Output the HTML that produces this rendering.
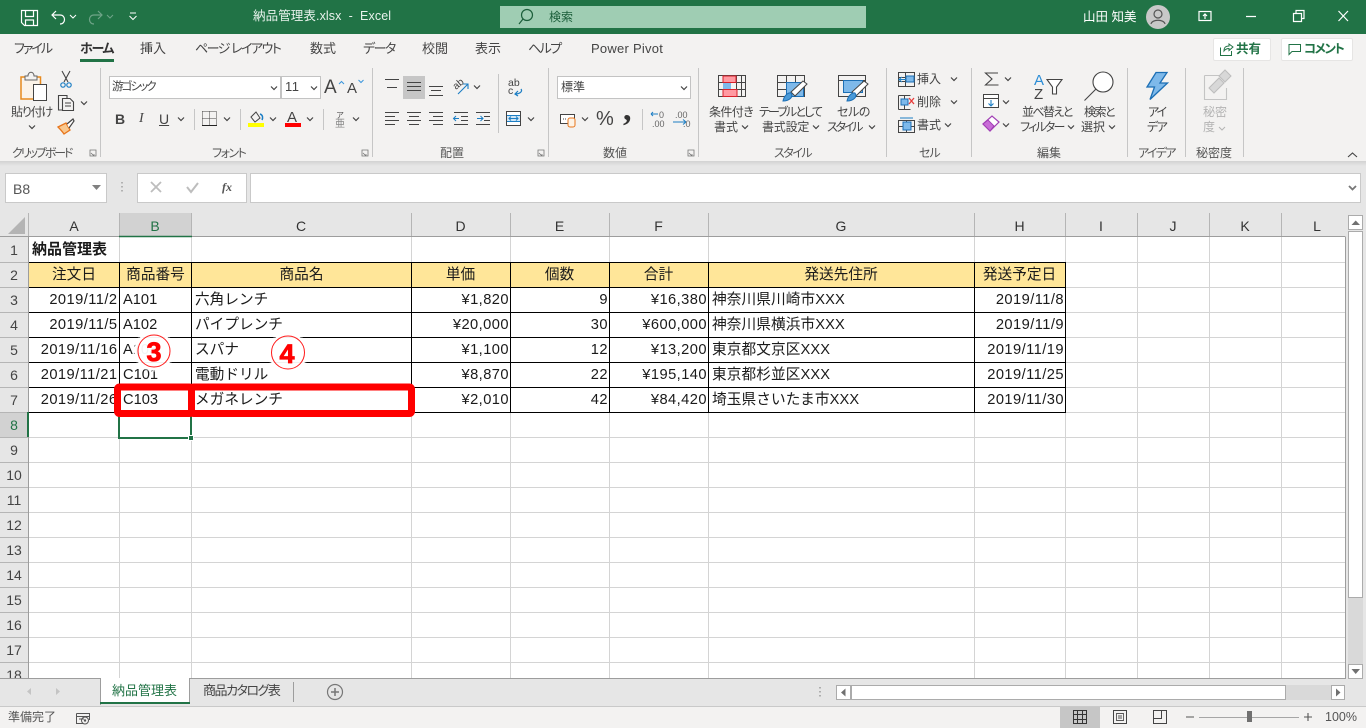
<!DOCTYPE html>
<html lang="ja"><head><meta charset="utf-8"><title>納品管理表.xlsx - Excel</title>
<style>
html,body{margin:0;padding:0;width:1366px;height:728px;overflow:hidden;background:#e6e6e6;font-family:"Liberation Sans","Noto Sans CJK JP",sans-serif}
div{position:absolute;box-sizing:border-box}
svg{position:absolute;left:0;top:0}
.t{white-space:nowrap;font-size:12px;line-height:16px;color:#444;font-family:"Liberation Sans","Noto Sans CJK JP",sans-serif;font-feature-settings:"palt"}
.l{color:#444;font-size:12px}
.tab{font-size:13px;line-height:18px;top:40px;color:#444}
.g{top:145px;color:#555;font-size:12px}
.c{white-space:nowrap;height:25px;line-height:26px;font-size:14.67px;color:#1a1a1a;font-family:"Liberation Sans","Noto Sans CJK JP",sans-serif;letter-spacing:.5px}
.n{text-align:right;letter-spacing:.45px}
.A{left:29px;width:88.500px}.B{left:123px;width:66px;letter-spacing:0}.C{left:195px;width:214px;letter-spacing:0}.D{left:412px;width:97px}.E{left:511px;width:97px}.F{left:610px;width:97px}.G{left:712px;width:260px;letter-spacing:.1px}.H{left:975px;width:89px}
.ch{top:213px;height:24px;line-height:26px;text-align:center;font-size:14px;color:#333}
.rh{left:0;width:28px;height:25px;line-height:26px;text-align:center;font-size:14px;color:#444}
.hd{top:262px;text-align:center;letter-spacing:0}
</style></head><body>

<!-- backgrounds -->
<div style="left:0;top:0;width:1366px;height:34px;background:#217346"></div>
<div style="left:500px;top:6px;width:366px;height:22px;background:#9fcdb3"></div>
<div style="left:0;top:34px;width:1366px;height:127px;background:#f3f2f1"></div>
<div style="left:0;top:161px;width:1366px;height:5px;background:linear-gradient(#d2d2d2,#e6e6e6)"></div>

<!-- title bar text -->
<div class="t" style="left:253px;top:8px;color:#e8f2ec;font-size:12.500px;line-height:16px;letter-spacing:.1px;font-feature-settings:normal">納品管理表.xlsx&nbsp; -&nbsp; Excel</div>
<div class="t" style="left:549px;top:9px;color:#1b5e3a;font-size:12px;font-feature-settings:normal">検索</div>
<div class="t" style="left:1083px;top:9px;color:#fff;font-size:12.500px;font-feature-settings:normal">山田 知美</div>

<!-- tabs -->
<div class="t tab" style="left:14px;letter-spacing:-2px">ファイル</div>
<div class="t tab" style="left:80px;font-weight:bold;color:#333;letter-spacing:-1.300px">ホーム</div>
<div class="t tab" style="left:140px">挿入</div>
<div class="t tab" style="left:195px;letter-spacing:-1.500px">ページ レイアウト</div>
<div class="t tab" style="left:310px">数式</div>
<div class="t tab" style="left:363px;letter-spacing:-1.500px">データ</div>
<div class="t tab" style="left:422px">校閲</div>
<div class="t tab" style="left:475px">表示</div>
<div class="t tab" style="left:528px;letter-spacing:-1.600px">ヘルプ</div>
<div class="t tab" style="left:591px;font-size:13px;letter-spacing:.25px">Power Pivot</div>
<div style="left:80px;top:59px;width:34px;height:3px;background:#217346"></div>

<div style="left:1213px;top:38px;width:58px;height:23px;background:#fff;border:1px solid #e6e5e4;border-radius:2px"></div>
<div style="left:1281px;top:38px;width:72px;height:23px;background:#fff;border:1px solid #e6e5e4;border-radius:2px"></div>
<div class="t" style="left:1236px;top:41px;color:#217346;font-weight:bold;font-size:12.500px;font-feature-settings:normal">共有</div>
<div class="t" style="left:1304px;top:41px;color:#217346;font-weight:bold;font-size:12.500px;letter-spacing:-1.500px">コメント</div>

<!-- ribbon controls -->
<div style="left:109px;top:76px;width:172px;height:23px;background:#fff;border:1px solid #c3c3c3"></div>
<div style="left:281px;top:76px;width:40px;height:23px;background:#fff;border:1px solid #c3c3c3"></div>
<div style="left:557px;top:76px;width:134px;height:23px;background:#fff;border:1px solid #c3c3c3"></div>
<div style="left:403px;top:76px;width:22px;height:23px;background:#c6c6c6"></div>

<div class="t" style="left:112px;top:79px;font-size:11.500px;letter-spacing:-1.900px">游ゴシック</div>
<div class="t" style="left:285px;top:79px;font-size:13px;letter-spacing:.5px">11</div>
<div class="t" style="left:561px;top:79px;font-size:12px;font-feature-settings:normal">標準</div>
<div class="t" style="left:324px;top:76px;font-size:19px;line-height:24px;color:#444">A</div>
<div class="t" style="left:347px;top:79px;font-size:15px;line-height:20px;color:#444">A</div>
<div class="t" style="left:115px;top:111px;font-size:14px;font-weight:bold">B</div>
<div class="t" style="left:139px;top:111px;font-size:14px;font-style:italic;font-family:'Liberation Serif',serif">I</div>
<div class="t" style="left:159px;top:111px;font-size:14px;text-decoration:underline">U</div>
<div class="t" style="left:596px;top:106px;font-size:20px;line-height:26px;color:#444">%</div>
<div class="t" style="left:623px;top:95px;font-size:34px;line-height:30px;color:#333;font-weight:bold;font-family:'Liberation Serif',serif">,</div>
<div class="t" style="left:508px;top:78px;font-size:10.500px;line-height:11px;color:#444">ab</div>
<div class="t" style="left:508px;top:86px;font-size:10.500px;line-height:11px;color:#444">c</div>
<div class="t" style="left:287px;top:110px;font-size:15px;color:#444">A</div>

<div class="t l" style="left:11px;top:104px;letter-spacing:-1.200px">貼り付け</div>
<div class="t l" style="left:709px;top:104px;letter-spacing:-.6px">条件付き</div>
<div class="t l" style="left:714px;top:119px">書式</div>
<div class="t l" style="left:759px;top:104px;letter-spacing:-1.850px">テーブルとして</div>
<div class="t l" style="left:762px;top:119px;letter-spacing:-.2px">書式設定</div>
<div class="t l" style="left:837px;top:104px;letter-spacing:-.4px">セルの</div>
<div class="t l" style="left:827px;top:119px;letter-spacing:-2.200px">スタイル</div>
<div class="t l" style="left:917px;top:71px">挿入</div>
<div class="t l" style="left:917px;top:94px">削除</div>
<div class="t l" style="left:917px;top:117px">書式</div>
<div class="t l" style="left:1022px;top:104px;letter-spacing:-1.600px">並べ替えと</div>
<div class="t l" style="left:1020px;top:119px;letter-spacing:-1.800px">フィルター</div>
<div class="t l" style="left:1084px;top:104px;letter-spacing:-1.500px">検索と</div>
<div class="t l" style="left:1081px;top:119px">選択</div>
<div class="t l" style="left:1148px;top:104px;letter-spacing:-2px">アイ</div>
<div class="t l" style="left:1147px;top:119px;letter-spacing:-1.500px">デア</div>
<div class="t l" style="left:1203px;top:104px;color:#b4b4b4">秘密</div>
<div class="t l" style="left:1203px;top:119px;color:#b4b4b4">度</div>

<div class="t g" style="left:12px;letter-spacing:-2.100px">クリップボード</div>
<div class="t g" style="left:212px;letter-spacing:-1.500px">フォント</div>
<div class="t g" style="left:440px">配置</div>
<div class="t g" style="left:603px">数値</div>
<div class="t g" style="left:774px;letter-spacing:-1.500px">スタイル</div>
<div class="t g" style="left:919px;letter-spacing:-1px">セル</div>
<div class="t g" style="left:1037px">編集</div>
<div class="t g" style="left:1138px;letter-spacing:-1.700px">アイデア</div>
<div class="t g" style="left:1196px">秘密度</div>

<!-- formula bar -->
<div style="left:5px;top:173px;width:102px;height:30px;background:#fff;border:1px solid #c9c9c9"></div>
<div class="t" style="left:13px;top:180px;font-size:14px;line-height:18px;color:#555">B8</div>
<div style="left:137px;top:173px;width:110px;height:30px;background:#fff;border:1px solid #c9c9c9"></div>
<div style="left:250px;top:173px;width:1111px;height:30px;background:#fff;border:1px solid #c9c9c9"></div>
<div class="t" style="left:222px;top:179px;font:italic bold 12px/16px 'Liberation Serif',serif;color:#555">fx</div>

<!-- sheet -->
<div style="left:29px;top:237px;width:1316px;height:441px;background:#fff"></div>
<div style="left:119px;top:213px;width:73px;height:24px;background:#d2d2d2"></div>
<div style="left:0;top:412px;width:28px;height:25px;background:#d2d2d2"></div>
<div style="left:29px;top:263px;width:1036px;height:24px;background:#ffe699"></div>

<div class="ch" style="left:29px;width:90px">A</div>
<div class="ch" style="left:119px;width:72px;color:#217346">B</div>
<div class="ch" style="left:191px;width:220px">C</div>
<div class="ch" style="left:411px;width:99px">D</div>
<div class="ch" style="left:510px;width:99px">E</div>
<div class="ch" style="left:609px;width:99px">F</div>
<div class="ch" style="left:708px;width:266px">G</div>
<div class="ch" style="left:974px;width:91px">H</div>
<div class="ch" style="left:1065px;width:72px">I</div>
<div class="ch" style="left:1137px;width:72px">J</div>
<div class="ch" style="left:1209px;width:72px">K</div>
<div class="ch" style="left:1281px;width:72px">L</div>

<div class="rh" style="top:237px">1</div><div class="rh" style="top:262px">2</div><div class="rh" style="top:287px">3</div>
<div class="rh" style="top:312px">4</div><div class="rh" style="top:337px">5</div><div class="rh" style="top:362px">6</div>
<div class="rh" style="top:387px">7</div><div class="rh" style="top:412px;color:#217346">8</div><div class="rh" style="top:437px">9</div>
<div class="rh" style="top:462px">10</div><div class="rh" style="top:487px">11</div><div class="rh" style="top:512px">12</div>
<div class="rh" style="top:537px">13</div><div class="rh" style="top:562px">14</div><div class="rh" style="top:587px">15</div>
<div class="rh" style="top:612px">16</div><div class="rh" style="top:637px">17</div><div class="rh" style="top:662px;height:16px;overflow:hidden">18</div>

<div class="c" style="left:32px;top:237px;font-weight:bold;letter-spacing:0;font-size:15px">納品管理表</div>

<div class="c hd" style="left:29px;width:90px">注文日</div>
<div class="c hd" style="left:120px;width:71px">商品番号</div>
<div class="c hd" style="left:192px;width:219px">商品名</div>
<div class="c hd" style="left:411px;width:99px">単価</div>
<div class="c hd" style="left:510px;width:99px">個数</div>
<div class="c hd" style="left:609px;width:99px">合計</div>
<div class="c hd" style="left:708px;width:266px">発送先住所</div>
<div class="c hd" style="left:974px;width:91px">発送予定日</div>

<div class="c A n" style="top:287px">2019/11/2</div><div class="c B" style="top:287px">A101</div><div class="c C" style="top:287px">六角レンチ</div><div class="c D n" style="top:287px">¥1,820</div><div class="c E n" style="top:287px">9</div><div class="c F n" style="top:287px">¥16,380</div><div class="c G" style="top:287px">神奈川県川崎市XXX</div><div class="c H n" style="top:287px">2019/11/8</div>
<div class="c A n" style="top:312px">2019/11/5</div><div class="c B" style="top:312px">A102</div><div class="c C" style="top:312px">パイプレンチ</div><div class="c D n" style="top:312px">¥20,000</div><div class="c E n" style="top:312px">30</div><div class="c F n" style="top:312px">¥600,000</div><div class="c G" style="top:312px">神奈川県横浜市XXX</div><div class="c H n" style="top:312px">2019/11/9</div>
<div class="c A n" style="top:337px">2019/11/16</div><div class="c B" style="top:337px">A103</div><div class="c C" style="top:337px">スパナ</div><div class="c D n" style="top:337px">¥1,100</div><div class="c E n" style="top:337px">12</div><div class="c F n" style="top:337px">¥13,200</div><div class="c G" style="top:337px">東京都文京区XXX</div><div class="c H n" style="top:337px">2019/11/19</div>
<div class="c A n" style="top:362px">2019/11/21</div><div class="c B" style="top:362px">C101</div><div class="c C" style="top:362px">電動ドリル</div><div class="c D n" style="top:362px">¥8,870</div><div class="c E n" style="top:362px">22</div><div class="c F n" style="top:362px">¥195,140</div><div class="c G" style="top:362px">東京都杉並区XXX</div><div class="c H n" style="top:362px">2019/11/25</div>
<div class="c A n" style="top:387px">2019/11/26</div><div class="c B" style="top:387px">C103</div><div class="c C" style="top:387px">メガネレンチ</div><div class="c D n" style="top:387px">¥2,010</div><div class="c E n" style="top:387px">42</div><div class="c F n" style="top:387px">¥84,420</div><div class="c G" style="top:387px">埼玉県さいたま市XXX</div><div class="c H n" style="top:387px">2019/11/30</div>

<!-- tab bar -->
<div style="left:0;top:678px;width:1366px;height:29px;background:#e6e6e6"></div>
<div style="left:100px;top:678px;width:90px;height:25px;background:#fff"></div>
<div class="t" style="left:112px;top:683px;color:#217346;font-size:13px;line-height:16px;font-feature-settings:normal">納品管理表</div>
<div class="t" style="left:203px;top:683px;color:#444;font-size:13px;line-height:16px;letter-spacing:-1.500px">商品カタログ表</div>
<div style="left:0;top:706px;width:1366px;height:22px;background:#f3f2f1;border-top:1px solid #c9c9c9"></div>
<div class="t" style="left:8px;top:709px;color:#555;font-size:12px;font-feature-settings:normal">準備完了</div>
<div style="left:1060px;top:707px;width:40px;height:21px;background:#c6c6c6"></div>
<div class="t" style="left:1325px;top:709px;color:#555;font-size:12.500px">100%</div>

<!-- scrollbars -->
<div style="left:1346px;top:213px;width:20px;height:465px;background:#e6e6e6"></div>
<div style="left:1348px;top:231px;width:15px;height:433px;background:#d9d9d9"></div>
<div style="left:1348px;top:231px;width:15px;height:367px;background:#fff;border:1px solid #ababab"></div>
<div style="left:1348px;top:215px;width:15px;height:15px;background:#fff;border:1px solid #ababab"></div>
<div style="left:1348px;top:664px;width:15px;height:15px;background:#fff;border:1px solid #ababab"></div>
<div style="left:836px;top:685px;width:508px;height:15px;background:#d9d9d9"></div>
<div style="left:851px;top:685px;width:435px;height:15px;background:#fff;border:1px solid #ababab"></div>
<div style="left:836px;top:685px;width:15px;height:15px;background:#fff;border:1px solid #ababab"></div>
<div style="left:1331px;top:685px;width:14px;height:15px;background:#fff;border:1px solid #ababab"></div>

<svg width="1366" height="728" viewBox="0 0 1366 728" fill="none">
<defs>
<path id="v" d="M-3-1.500 0 1.500 3-1.500" stroke="#444" stroke-width="1.200"/>
<path id="lv" d="M-3-3H3V3L0 3H-3ZM-2 0 1 3M1 1V3H-1" stroke="#777" stroke-width=".8"/>
</defs>

<!-- grid lines -->
<g stroke="#d4d4d4" stroke-width="1" shape-rendering="crispEdges">
<path d="M119.500 237V678M191.500 237V678M411.500 237V678M510.500 237V678M609.500 237V678M708.500 237V678M974.500 237V678M1065.500 237V678M1137.500 237V678M1209.500 237V678M1281.500 237V678"/>
<path d="M29 262.500H1345M29 287.500H1345M29 312.500H1345M29 337.500H1345M29 362.500H1345M29 387.500H1345M29 412.500H1345M29 437.500H1345M29 462.500H1345M29 487.500H1345M29 512.500H1345M29 537.500H1345M29 562.500H1345M29 587.500H1345M29 612.500H1345M29 637.500H1345M29 662.500H1345"/>
<path stroke="#b5b5b5" d="M0 262.500H28M0 287.500H28M0 312.500H28M0 337.500H28M0 362.500H28M0 387.500H28M0 412.500H28M0 437.500H28M0 462.500H28M0 487.500H28M0 512.500H28M0 537.500H28M0 562.500H28M0 587.500H28M0 612.500H28M0 637.500H28M0 662.500H28"/>
<path stroke="#b5b5b5" d="M119.500 213V237M191.500 213V237M411.500 213V237M510.500 213V237M609.500 213V237M708.500 213V237M974.500 213V237M1065.500 213V237M1137.500 213V237M1209.500 213V237M1281.500 213V237M28.500 213V237"/>
</g>
<g stroke="#9d9d9d" shape-rendering="crispEdges">
<path d="M0 236.500H1345.500M28.500 237V678M1345.500 237V678M0 678.500H100M190 678.500H1346"/>
</g>
<path d="M119 236.500H192" stroke="#217346" stroke-width="1.500"/>
<path d="M28 412V437" stroke="#217346" stroke-width="2"/>
<path d="M8 234 25 234 25 217Z" fill="#b4b4b4"/>

<!-- table borders -->
<g stroke="#000" stroke-width="1" shape-rendering="crispEdges">
<path d="M29 262.500H1066M29 287.500H1066M29 312.500H1066M29 337.500H1066M29 362.500H1066M29 387.500H1066M29 412.500H1066"/>
<path d="M119.500 262V413M191.500 262V413M411.500 262V413M510.500 262V413M609.500 262V413M708.500 262V413M974.500 262V413M1065.500 262V413"/>
</g>

<!-- selection -->
<rect x="119" y="413" width="72" height="25" stroke="#217346" stroke-width="2"/>
<rect x="188.500" y="435.500" width="5" height="5" fill="#217346" stroke="#fff"/>

<!-- red highlight -->
<rect x="117.500" y="387" width="74" height="26.500" rx="2" stroke="#ff0000" stroke-width="7"/>
<rect x="191.500" y="387" width="220" height="26.500" rx="2" stroke="#ff0000" stroke-width="7"/>

<!-- callouts -->
<g>
<circle cx="154" cy="351" r="21" fill="#fff" opacity=".35"/>
<circle cx="154" cy="351" r="18.500" fill="#fff" fill-opacity=".88" stroke="#fff" stroke-width="2"/>
<circle cx="154" cy="351" r="16" fill="#fff" fill-opacity=".3" stroke="#ff1a1a" stroke-width="1"/>
<circle cx="288" cy="352.500" r="21" fill="#fff" opacity=".35"/>
<circle cx="288" cy="352.500" r="18.500" fill="#fff" fill-opacity=".88" stroke="#fff" stroke-width="2"/>
<circle cx="288" cy="352.500" r="16.500" fill="#fff" fill-opacity=".3" stroke="#ff1a1a" stroke-width="1"/>
<text x="154" y="361" text-anchor="middle" font-family="Liberation Sans,sans-serif" font-weight="bold" font-size="27" fill="#ff0000" stroke="#ff0000" stroke-width=".8">3</text>
<text x="287" y="363" text-anchor="middle" font-family="Liberation Sans,sans-serif" font-weight="bold" font-size="27" fill="#ff0000" stroke="#ff0000" stroke-width=".8">4</text>
</g>

<!-- title bar icons -->
<g stroke="#fff" stroke-width="1.200">
<path d="M21.500 10.500H37.500V25.500H24.500L21.500 22.500Z"/>
<path d="M25.500 11V16.500H33.500V11M25.500 25V20H33.500V25"/>
<path d="M56 11 52 15 56 19M52.500 15H60C66 15 66 24 60 24"/>
<path d="M70 15 73 18 76 15" stroke-width="1"/>
<path d="M129.500 16 133 19.500 136.500 16M130 13H136" stroke-width="1"/>
<rect x="1199" y="11.500" width="12" height="9"/>
<path d="M1203 16 1205 14 1207 16M1205 14V19"/>
<path d="M1246 16.500H1256M1293.500 13.500H1301.500V21.500H1293.500ZM1296 13V10.500H1304V18.500H1302"/>
<path d="M1338.500 11 1348 21M1348 11 1338.500 21"/>
</g>
<g stroke="#6fa488" stroke-width="1.200">
<path d="M98 11 102 15 98 19M102 15H94C88 15 88 24 94 24"/>
<path d="M107 15 110 18 113 15" stroke-width="1"/>
</g>
<circle cx="527" cy="15" r="5.500" stroke="#1b5e3a" stroke-width="1.200"/>
<path d="M523 19 519 24" stroke="#1b5e3a" stroke-width="1.200"/>
<circle cx="1158" cy="17" r="12" fill="#c8c8c8"/>
<circle cx="1158" cy="14" r="4" stroke="#555" stroke-width="1.200"/>
<path d="M1151 24C1152 19 1164 19 1165 24" stroke="#555" stroke-width="1.200"/>

<!-- share/comment icons -->
<path d="M1220.500 47.500V55.500H1231.500V51M1224 51C1224 47 1226 46 1229 46V44L1233 47 1229 50.500V48.500C1227 48.500 1225.500 49 1224 51Z" stroke="#217346"/>
<path d="M1289 44.500H1300.500V51.500H1292L1289 54.500Z" stroke="#217346"/>

<!-- group separators -->
<g stroke="#c6c6c6" shape-rendering="crispEdges">
<path d="M100.500 68V157M372.500 68V157M548.500 68V157M698.500 68V157M886.500 68V157M971.500 68V157M1127.500 68V157M1185.500 68V157M1243.500 68V157"/>
<path d="M194.500 109V130M240.500 109V130M323.500 109V130M498.500 74V133M642.500 109V130"/>
</g>

<!-- launchers -->
<use href="#lv" x="93" y="153"/><use href="#lv" x="365" y="153"/><use href="#lv" x="541" y="153"/><use href="#lv" x="691" y="153"/>

<!-- paste -->
<rect x="21" y="77" width="19.500" height="22" fill="#fbf3e8" stroke="#e8891c" stroke-width="1.500"/>
<path d="M25 80V76H28C28 71 34 71 34 76H37V80Z" fill="#f3f2f1" stroke="#666"/>
<rect x="33.500" y="84.500" width="13" height="16" fill="#fff" stroke="#444"/>
<use href="#v" x="32" y="127"/>
<!-- scissors -->
<path d="M62 71 68 82M70 71 64 82" stroke="#444" stroke-width="1.100"/>
<circle cx="63" cy="85" r="2.200" stroke="#1c7ec4" stroke-width="1.200"/><circle cx="69" cy="85" r="2.200" stroke="#1c7ec4" stroke-width="1.200"/>
<!-- copy -->
<path d="M62 110H58.500V95.500H67V98" stroke="#444" stroke-width="1.100"/>
<path d="M62.500 98.500H70L73.500 102V110.500H62.500ZM65 103H71M65 106H71" stroke="#444" stroke-width="1.100"/>
<use href="#v" x="84" y="103"/>
<!-- painter -->
<path d="M58 127 66 123 70 130 64 134C62 131 60 129 58 127Z" fill="#f9c88f" stroke="#e8761c" stroke-width="1.300"/>
<path d="M67 124 73 119 74 121 69 128" fill="#fff" stroke="#444" stroke-width="1.200"/>

<!-- font group -->
<use href="#v" x="274" y="88"/><use href="#v" x="314" y="88"/>
<path d="M339 84 341.500 81.500 344 84M358.500 80 361 82.500 363.500 80" stroke="#3a96dd"/>
<use href="#v" x="181" y="119"/><use href="#v" x="227" y="119"/><use href="#v" x="273" y="119"/><use href="#v" x="310" y="119"/><use href="#v" x="356" y="119"/>
<path d="M202.500 111.500H216.500M202.500 118.500H216.500M202.500 111.500V125M216.500 111.500V125M209.500 111.500V125" stroke="#444" stroke-dasharray="1 1"/>
<path d="M202 125.500H217" stroke="#222"/>
<path d="M251 117 256 112 260 118 255 122Z" stroke="#444"/><path d="M260 114C263 115 263 118 262 120" stroke="#1c7ec4" stroke-width="1.500"/>
<rect x="248" y="123" width="16" height="4" fill="#ffff00"/>
<rect x="285" y="123" width="16" height="4" fill="#ff0000"/>
<text x="336" y="118" font-family="Noto Sans CJK JP,sans-serif" font-size="8" fill="#555">ア</text>
<text x="335" y="127" font-family="Noto Sans CJK JP,sans-serif" font-size="10" fill="#888">亜</text>

<!-- alignment -->
<g stroke="#444" shape-rendering="crispEdges">
<path d="M385 79.500H399M387 87.500H397"/>
<path d="M407 82.500H421M407 86.500H421M407 90.500H421"/>
<path d="M429 86.500H443M431 90.500H441M429 95.500H443"/>
<path d="M385 112.500H399M385 116.500H395M385 120.500H399M385 124.500H395"/>
<path d="M407 112.500H421M409 116.500H419M407 120.500H421M409 124.500H419"/>
<path d="M429 112.500H443M433 116.500H443M429 120.500H443M433 124.500H443"/>
<path d="M454 112.500H468M461 116.500H468M461 120.500H468M454 124.500H468M476 112.500H490M476 124.500H490M484 116.500H490M484 120.500H490"/>
</g>
<path d="M459 118.500H453.500M456 116 453.500 118.500 456 121M477 118.500H483M480.500 116 483 118.500 480.500 121" stroke="#1c7ec4"/>
<text x="0" y="0" transform="translate(456 90) rotate(-40)" font-family="Liberation Sans,sans-serif" font-size="10" fill="#444">ab</text>
<path d="M458 94 468 84M463 84H468V89" stroke="#1c7ec4" stroke-width="1.100"/>
<use href="#v" x="477" y="87"/>
<path d="M521 89C523 92 519 94 515 94M518 91 515 94 518 96" stroke="#1c7ec4" stroke-width="1.200"/>
<rect x="506.500" y="111.500" width="14" height="14" fill="#fff" stroke="#444"/>
<rect x="507" y="115.500" width="13" height="6" fill="#cfe6f7"/>
<path d="M507 115.500H520M507 121.500H520" stroke="#1c7ec4"/>
<path d="M509 118.500H518M511 116.500 509 118.500 511 120.500M516 116.500 518 118.500 516 120.500" stroke="#1c7ec4"/>
<use href="#v" x="531" y="119"/>

<!-- number -->
<use href="#v" x="684" y="88"/>
<rect x="560.500" y="114.500" width="14" height="9" fill="#fff" stroke="#444"/>
<rect x="568" y="118" width="7" height="9" rx="2" fill="#fdf3e6" stroke="#e8761c"/>
<path d="M563 119H567" stroke="#444" stroke-dasharray="1 1"/>
<use href="#v" x="585" y="119"/>
<path d="M651 114H658M651 114 653 112M651 114 653 116" stroke="#1c7ec4"/>
<path d="M673 122H686M686 122 683 119.500M686 122 683 124.500" stroke="#1c7ec4"/>
<g font-family="Liberation Sans,sans-serif" font-size="9" fill="#666">
<text x="659" y="118">0</text><text x="652" y="127">.00</text>
<text x="675" y="118">.00</text><text x="683" y="127">.0</text>
</g>

<!-- conditional formatting -->
<g stroke="#444">
<rect x="718.500" y="75.500" width="27" height="21"/>
<path d="M718 82.500H746M718 89.500H746M727.500 75V97M736.500 75V97M741.500 75V97"/>
</g>
<rect x="723" y="76" width="13" height="6.500" fill="#ff9aa2" stroke="#d9202a"/>
<rect x="723" y="83" width="8" height="6" fill="#7eb9ea"/>
<rect x="723" y="89.500" width="14" height="7" fill="#ff9aa2" stroke="#d9202a"/>
<use href="#v" x="745" y="127"/>

<!-- format as table -->
<g stroke="#444">
<rect x="777.500" y="75.500" width="27" height="21"/>
<path d="M778 82.500H805M778 89.500H805M786.500 75V97M795.500 75V97"/>
</g>
<rect x="786.500" y="82.500" width="17" height="14" fill="#7eb9ea" stroke="#1c6fb5"/>
<path d="M791 92 803 81 807 84 795 96Z" fill="#fff" stroke="#444"/>
<path d="M783 101C784 96 788 92 791 93 794 97 789 101 783 101Z" fill="#4a9ad8" stroke="#1c6fb5"/>
<use href="#v" x="816" y="127"/>

<!-- cell styles -->
<rect x="838.500" y="75.500" width="27" height="21" stroke="#444"/>
<path d="M839 80.500H865" stroke="#444"/>
<rect x="843.500" y="80.500" width="19" height="12" fill="#7eb9ea" stroke="#1c6fb5"/>
<path d="M852 92 864 81 868 84 856 96Z" fill="#fff" stroke="#444"/>
<path d="M847 101C848 96 852 92 855 93 858 97 853 101 847 101Z" fill="#4a9ad8" stroke="#1c6fb5"/>
<use href="#v" x="872" y="127"/>

<!-- cells -->
<g stroke="#444" shape-rendering="crispEdges">
<path d="M898.500 72.500H914.500V86.500H898.500ZM905.500 72.500V86.500M898.500 77.500H914.500M898.500 81.500H914.500"/>
<path d="M898.500 95.500H910.500M898.500 109.500H910.500M898.500 95.500V109.500M904.500 95.500V109.500"/>
<path d="M898.500 120.500H914.500V132.500H898.500ZM906.500 120.500V132.500M898.500 126.500H914.500"/>
</g>
<rect x="906" y="76" width="8" height="6" fill="#7eb9ea" stroke="#1c6fb5"/>
<path d="M906 79.500H899M902 77 899 79.500 902 82" stroke="#1c7ec4" fill="#f3f2f1"/>
<rect x="901" y="99" width="7" height="6" fill="#7eb9ea" stroke="#1c6fb5"/>
<path d="M909 98 914 104M914 98 909 104" stroke="#e83a3a" stroke-width="1.300"/>
<rect x="903" y="122" width="8" height="8" fill="#7eb9ea" stroke="#1c6fb5"/>
<path d="M900 118H913" stroke="#1c7ec4"/>
<use href="#v" x="954" y="79"/><use href="#v" x="954" y="102"/><use href="#v" x="948" y="125"/>

<!-- editing -->
<path d="M998 73H985.500L992 79 985.500 85H998.500" stroke="#444" stroke-width="1.100"/>
<use href="#v" x="1008" y="79"/>
<rect x="983.500" y="94.500" width="15" height="13" fill="#fff" stroke="#444"/>
<path d="M984 98.500H998" stroke="#444"/>
<path d="M991 100V106M988.500 103.500 991 106 993.500 103.500" stroke="#1c7ec4" stroke-width="1.100"/>
<use href="#v" x="1006" y="102"/>
<path d="M983 124 992 116 999 122 990 131Z" fill="#fff" stroke="#a13eb5" stroke-width="1.200"/>
<path d="M983 124 988 120 994 126 990 131Z" fill="#c86dd7" stroke="#a13eb5"/>
<use href="#v" x="1006" y="125"/>
<text x="1034" y="85" font-family="Liberation Sans,sans-serif" font-size="15" fill="#2b8dd6">A</text>
<text x="1034" y="99" font-family="Liberation Sans,sans-serif" font-size="15" fill="#444">Z</text>
<path d="M1047 79.500H1062L1056.500 87V94L1052.500 94V87Z" fill="#fff" stroke="#444" stroke-width="1.100"/>
<use href="#v" x="1071" y="127"/>
<circle cx="1103" cy="82" r="10" fill="#fff" stroke="#444" stroke-width="1.100"/>
<path d="M1096 89 1084.500 100.500" stroke="#444" stroke-width="1.100"/>
<use href="#v" x="1112" y="127"/>

<!-- ideas -->
<path d="M1156 72.500H1167L1160 83H1167.500L1150 99.500 1154.500 87H1147Z" fill="#7eb9ea" stroke="#1c6fb5" stroke-width="1.300"/>

<!-- sensitivity -->
<path d="M1204.500 75.500H1222M1204.500 75.500V99.500H1226.500V88" stroke="#c4c4c4" stroke-width="1.100"/>
<path d="M1209 88 1219 78 1224 83 1214 93Z" fill="#d8d8d8" stroke="#bdbdbd"/>
<path d="M1219 76 1225 70 1231 76 1225 82Z" fill="#d8d8d8" stroke="#bdbdbd"/>
<path d="M1219 127 1222 130 1225 127" stroke="#b4b4b4"/>
<path d="M1348 157 1352.500 153 1357 157" stroke="#444" stroke-width="1.100"/>

<!-- formula bar icons -->
<path d="M92 185H101L96.500 190Z" fill="#808080"/>
<path d="M122 182V183.500M122 186V187.500M122 190V191.500" stroke="#a0a0a0" stroke-width="1.500"/>
<path d="M151 182 161 192M161 182 151 192" stroke="#bdbdbd" stroke-width="1.800"/>
<path d="M187 187 191 192 198 183" stroke="#bdbdbd" stroke-width="2"/>
<path d="M1349 186 1352.500 189.500 1356 186" stroke="#777" stroke-width="1.800"/>

<!-- scrollbar arrows -->
<path d="M1351.500 225H1360L1355.700 220.500Z" fill="#707070"/>
<path d="M1351.500 669H1360L1355.700 674Z" fill="#707070"/>
<path d="M845.500 688.500V696.500L841 692.500Z" fill="#707070"/>
<path d="M1336 688.500V696.500L1340.500 692.500Z" fill="#707070"/>

<!-- sheet tabs -->
<path d="M100.500 678V705M189.500 678V703" stroke="#9d9d9d"/>
<path d="M100 703H190" stroke="#217346" stroke-width="2"/>
<path d="M293.500 682V702" stroke="#9d9d9d"/>
<path d="M31 688 27 691.500 31 695ZM56 688 60 691.500 56 695Z" fill="#c4c4c4"/>
<circle cx="335" cy="692" r="7.500" stroke="#777" stroke-width="1.200"/>
<path d="M331 692H339M335 688V696" stroke="#777" stroke-width="1.500"/>
<path d="M820 687V688.500M820 691V692.500M820 695V696.500" stroke="#9a9a9a" stroke-width="1.500"/>

<!-- status icons -->
<path d="M76.500 713.500H89.500V720M76.500 713.500V723.500H83M76.500 716.500H89.500M79 719H84" stroke="#555"/>
<circle cx="85" cy="720.500" r="3.500" stroke="#555"/><circle cx="85" cy="720.500" r="1.200" fill="#555"/>
<path d="M1073.500 710.500H1086.500V723.500H1073.500ZM1073.500 714.500H1086.500M1073.500 719.500H1086.500M1077.500 710.500V723.500M1082.500 710.500V723.500" stroke="#333" shape-rendering="crispEdges"/>
<path d="M1113.500 710.500H1126.500V723.500H1113.500Z" stroke="#444" shape-rendering="crispEdges"/>
<path d="M1116.500 713.500H1123.500V720.500H1116.500ZM1118 716H1122M1118 718H1122" stroke="#555" stroke-width=".9"/>
<path d="M1153.500 710.500H1166.500V723.500H1153.500ZM1153.500 718.500H1161.500V710.500" stroke="#444" shape-rendering="crispEdges"/>
<path d="M1186 717H1194M1304 717H1312M1308 713V721" stroke="#555" stroke-width="1.100"/>
<path d="M1199 717.500H1299" stroke="#a6a6a6"/>
<rect x="1247" y="711" width="5" height="11" fill="#707070"/>
</svg>
</body></html>
